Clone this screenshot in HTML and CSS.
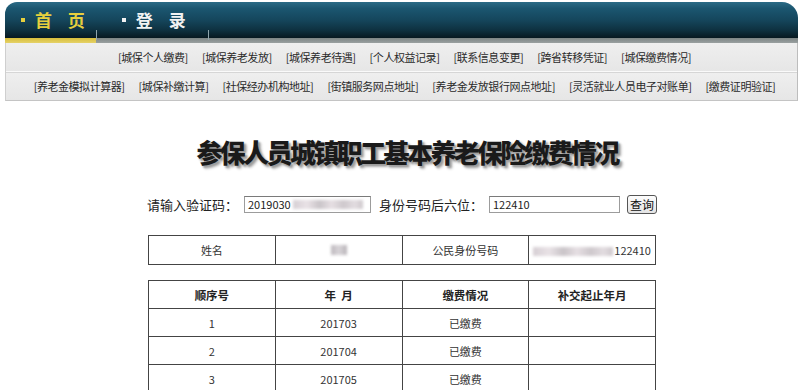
FILE: index.html
```html
<!DOCTYPE html>
<html lang="zh-CN">
<head>
<meta charset="utf-8">
<title>参保人员城镇职工基本养老保险缴费情况</title>
<link rel="stylesheet" href="styles.css">
</head>
<body>
<div class="site">
  <header class="topbar">
    <a class="tab tab-active" href="#"><span class="dot"></span>首 页</a>
    <a class="tab" href="#"><span class="dot"></span>登 录</a>
  </header>
  <div class="strip">
    <span class="strip-active"></span>
    <span class="sep sep1"></span>
    <span class="sep sep2"></span>
  </div>
  <nav class="subnav">
    <div class="navrow">
      <a href="#">[城保个人缴费]</a>
      <a href="#">[城保养老发放]</a>
      <a href="#">[城保养老待遇]</a>
      <a href="#">[个人权益记录]</a>
      <a href="#">[联系信息变更]</a>
      <a href="#">[跨省转移凭证]</a>
      <a href="#">[城保缴费情况]</a>
    </div>
    <div class="navrow">
      <a href="#">[养老金模拟计算器]</a>
      <a href="#">[城保补缴计算]</a>
      <a href="#">[社保经办机构地址]</a>
      <a href="#">[街镇服务网点地址]</a>
      <a href="#">[养老金发放银行网点地址]</a>
      <a href="#">[灵活就业人员电子对账单]</a>
      <a href="#">[缴费证明验证]</a>
    </div>
  </nav>
</div>

<main class="content">
  <h1 class="title">参保人员城镇职工基本养老保险缴费情况</h1>

  <form class="query">
    <label class="qlabel">请输入验证码：</label>
    <span class="field field-code">2019030<span class="blur blur-code"></span></span>
    <label class="qlabel">身份号码后六位：</label>
    <span class="field field-id">122410</span>
    <button type="button" class="btn">查询</button>
  </form>

  <table class="grid info">
    <tr>
      <td>姓名</td>
      <td><span class="blur blur-name"></span></td>
      <td>公民身份号码</td>
      <td><span class="blur blur-id"></span>122410</td>
    </tr>
  </table>

  <table class="grid records">
    <tr class="head">
      <th>顺序号</th>
      <th>年&nbsp;&nbsp;月</th>
      <th>缴费情况</th>
      <th>补交起止年月</th>
    </tr>
    <tr><td>1</td><td>201703</td><td>已缴费</td><td></td></tr>
    <tr><td>2</td><td>201704</td><td>已缴费</td><td></td></tr>
    <tr><td>3</td><td>201705</td><td>已缴费</td><td></td></tr>
  </table>
</main>
</body>
</html>
```
FILE: styles.css
```css
html, body {
  margin: 0;
  padding: 0;
  background: #fff;
}

body {
  font-family: "Noto Sans CJK SC", "Liberation Sans", sans-serif;
  font-size: 12px;
  color: #333;
  overflow: hidden;
}

.site {
  margin: 2px 6px 0 5px;
}

.topbar {
  height: 36px;
  border-radius: 12px 16px 0 0;
  background: linear-gradient(#2b6b86 0%, #1b5670 18%, #15465c 50%, #0e3140 78%, #071820 100%);
  display: flex;
  align-items: center;
  padding-left: 16px;
  box-sizing: border-box;
}

.tab {
  display: flex;
  align-items: center;
  font-size: 17px;
  font-weight: bold;
  color: #f2f2f2;
  text-decoration: none;
  letter-spacing: 6px;
  margin-right: 31px;
  padding-bottom: 1px;
}

.tab-active {
  color: #e6cf3e;
}

.dot {
  width: 4px;
  height: 4px;
  background: currentColor;
  margin-right: 10px;
}

.strip {
  position: relative;
  height: 5px;
  background: linear-gradient(#7d8585, #9aa0a0);
  display: flex;
}

.strip-active {
  width: 91px;
  background: linear-gradient(#d8bd3a, #e5d268);
}

.sep {
  position: absolute;
  bottom: 3px;
  width: 1px;
  height: 10px;
  background: #8fa4ac;
}

.sep1 { left: 91px; }
.sep2 { left: 203px; }

.subnav {
  border-left: 1px solid #cfcfcf;
  border-right: 1px solid #bdbdbd;
  border-bottom: 1px solid #c4c4c4;
}

.navrow {
  height: 28px;
  display: flex;
  justify-content: center;
  align-items: center;
  gap: 14px;
  background: linear-gradient(#efefef, #e6e6e6);
  padding-left: 6px;
  white-space: nowrap;
}

.navrow + .navrow {
  border-top: 1px solid #fafafa;
  box-shadow: inset 0 1px 0 #d6d6d6;
}

.navrow a {
  color: #2a2a2a;
  text-decoration: none;
  font-size: 11px;
  letter-spacing: -0.45px;
}

.content {
  display: flex;
  flex-direction: column;
  align-items: center;
}

.title {
  margin: 35px 0 0 10px;
  font-size: 26px;
  line-height: 32px;
  letter-spacing: -2.6px;
  font-weight: 900;
  color: #1a1a1a;
  text-shadow: 2px 2px 2px #9a9a9a, 3px 3px 3px #c0c0c0;
}

.query {
  margin: 26px 0 0 0;
  display: flex;
  align-items: center;
  height: 20px;
}

.qlabel {
  font-size: 13px;
  color: #222;
  margin-right: 6px;
}

.field {
  height: 17px;
  box-sizing: border-box;
  border: 1px solid #9c9c9c;
  border-top-color: #7a7a7a;
  background: #fff;
  font-size: 11px;
  line-height: 15px;
  padding-left: 3px;
  color: #222;
  display: flex;
  align-items: center;
  margin-right: 8px;
}

.field-code { width: 127px; }
.field-id { width: 131px; margin-right: 7px; }

.btn {
  height: 19px;
  padding: 0 2px;
  font-family: inherit;
  font-size: 12px;
  line-height: 15px;
  color: #111;
  background: linear-gradient(#fdfdfd, #e4e4e4);
  border: 1px solid #555;
  border-radius: 3px;
}

.blur {
  display: inline-block;
  filter: blur(1.4px);
  background: linear-gradient(90deg, #d6cfd4 0%, #e9e2e6 20%, #c9c4c8 38%, #e6dfe3 55%, #cec8cc 72%, #e2dce0 88%, #cfc9cd 100%);
  height: 9px;
}

.blur-code { width: 70px; margin-left: 2px; }
.blur-name { width: 16px; height: 10px; background: linear-gradient(90deg, #bdb8bd, #d8d4d8 50%, #b8b3b8); }
.blur-id { width: 80px; margin-right: 1px; vertical-align: -1px; }

.grid {
  border-collapse: collapse;
  width: 508px;
  table-layout: fixed;
  border: 1px solid #222;
}

.grid td, .grid th {
  border: 1px solid #444;
  text-align: center;
  font-size: 11px;
  color: #333;
  padding: 0;
}

.info {
  margin-top: 21px;
}

.info td {
  height: 28px;
}

.records {
  margin-top: 15px;
}

.records td, .records th {
  height: 27px;
}

.records th {
  font-weight: bold;
  font-size: 11.5px;
  color: #222;
}
```
